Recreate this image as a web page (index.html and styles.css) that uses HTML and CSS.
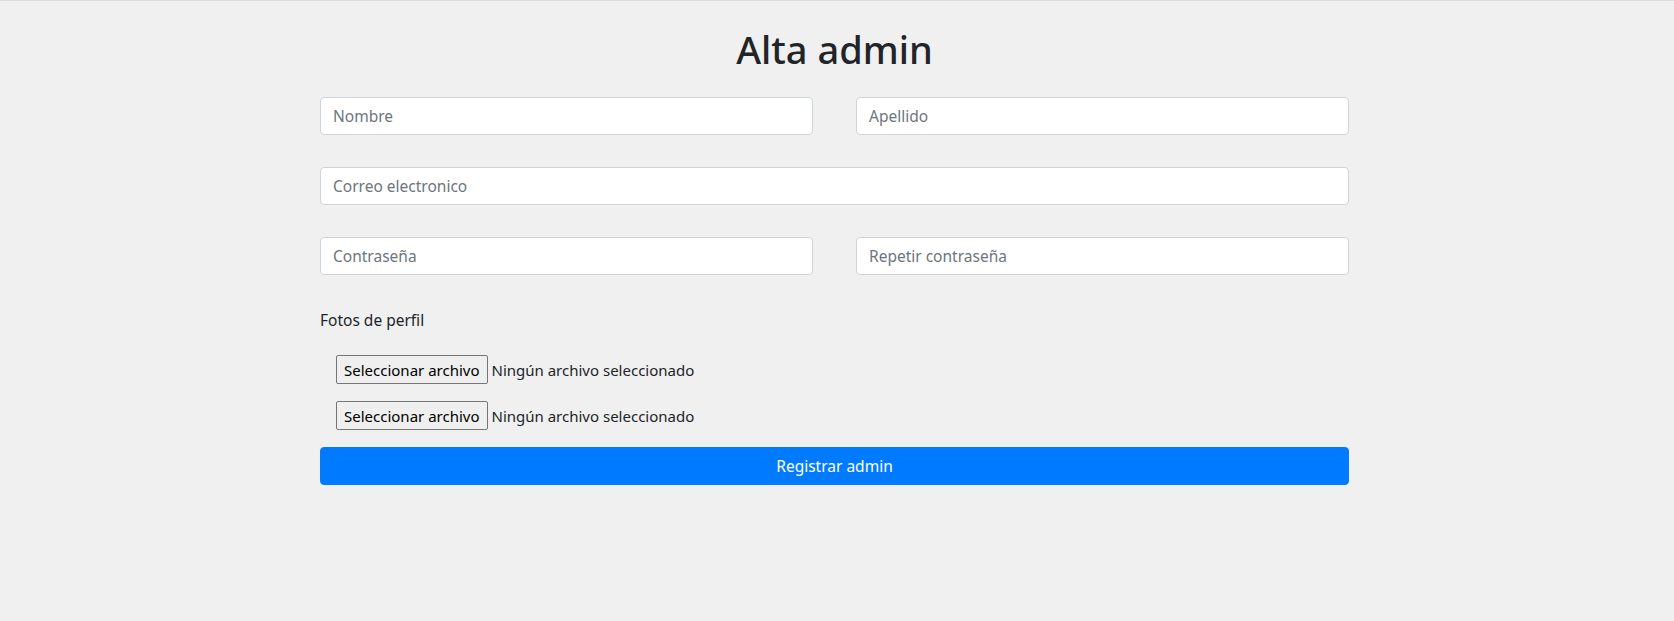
FILE: index.html
```html
<!DOCTYPE html>
<html lang="es">
<head>
<meta charset="utf-8">
<title>Alta admin</title>
<link rel="stylesheet" href="styles.css">
</head>
<body>
<main class="page">
  <h1 class="title">Alta admin</h1>
  <form class="form">
    <div class="row two">
      <input class="field" type="text" placeholder="Nombre">
      <input class="field" type="text" placeholder="Apellido">
    </div>
    <div class="row">
      <input class="field" type="email" placeholder="Correo electronico">
    </div>
    <div class="row two">
      <input class="field" type="password" placeholder="Contraseña">
      <input class="field" type="password" placeholder="Repetir contraseña">
    </div>
    <div class="label">Fotos de perfil</div>
    <div class="files">
      <div class="file"><span class="file-btn">Seleccionar archivo</span><span class="file-name">Ningún archivo seleccionado</span></div>
      <div class="file"><span class="file-btn">Seleccionar archivo</span><span class="file-name">Ningún archivo seleccionado</span></div>
    </div>
    <button class="submit" type="button">Registrar admin</button>
  </form>
</main>
</body>
</html>
```
FILE: styles.css
```css
* { box-sizing: border-box; }
html, body { margin: 0; }
body {
  background: #f0f0f0;
  border-top: 1px solid #dcdcdc;
  font-family: "Noto Sans", "Open Sans", sans-serif;
  font-size: 16px;
  color: #212529;
  padding-right: 5px;
}
.page {
  width: 1029px;
  margin: 0 auto;
}
.title {
  margin: 0;
  padding-top: 24px;
  height: 96px;
  font-size: 38px;
  font-weight: 500;
  line-height: 48px;
  text-align: center;
  color: #212529;
}
.form { display: flex; flex-direction: column; }
.row {
  display: grid;
  grid-template-columns: 1fr;
  margin-bottom: 32px;
}
.row.two { grid-template-columns: 1fr 1fr; column-gap: 43px; }
.field {
  height: 38px;
  padding: 6px 12px;
  border: 1px solid #ced4da;
  border-radius: 4px;
  background: #fff;
  font-family: inherit;
  font-size: 15.5px;
  color: #495057;
  outline: none;
}
.field::placeholder { color: #6c757d; }
.label {
  line-height: 24px;
  margin-top: 1px;
  margin-bottom: 23px;
  font-size: 15.5px;
}
.files {
  display: flex;
  flex-direction: column;
  gap: 17px;
  padding-left: 16px;
}
.file { display: flex; align-items: center; height: 29px; }
.file-btn {
  display: inline-flex;
  align-items: center;
  height: 29px;
  padding: 0 7px;
  background: #efefef;
  border: 1px solid #767676;
  border-radius: 2px;
  color: #000;
  font-size: 15px;
  white-space: nowrap;
}
.file-name { margin-left: 4px; font-size: 15px; white-space: nowrap; }
.submit {
  margin-top: 17px;
  height: 38px;
  width: 100%;
  border: 1px solid #007bff;
  border-radius: 4px;
  background: #007bff;
  color: #fff;
  font-family: inherit;
  font-size: 15.5px;
}
```
